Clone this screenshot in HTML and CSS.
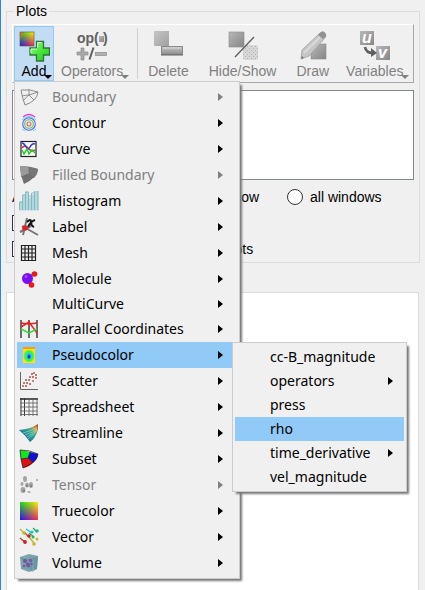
FILE: index.html
```html
<!DOCTYPE html>
<html lang="en">
<head>
<meta charset="utf-8">
<title>Plots</title>
<link rel="stylesheet" href="styles.css">
</head>
<body>
<svg class="defs" width="0" height="0" aria-hidden="true">
  <defs>
    <linearGradient id="gTop"><stop offset="0" stop-color="#18d818"/><stop offset="1" stop-color="#ffee10"/></linearGradient>
    <linearGradient id="gBottom"><stop offset="0" stop-color="#2a10f0"/><stop offset="1" stop-color="#f03050"/></linearGradient>
    <linearGradient id="gFade" x2="0" y2="1"><stop offset="0" stop-color="#000"/><stop offset="1" stop-color="#fff"/></linearGradient>
    <mask id="mFade" maskContentUnits="objectBoundingBox"><rect width="1" height="1" fill="url(#gFade)"/></mask>
    <linearGradient id="gGrey" x2="1" y2="1"><stop offset="0" stop-color="#b8b8b8"/><stop offset="1" stop-color="#868686"/></linearGradient>
    <linearGradient id="gPlus" x2="1" y2="1"><stop offset="0" stop-color="#9dff8a"/><stop offset=".5" stop-color="#4be83c"/><stop offset="1" stop-color="#22c51c"/></linearGradient>
    <linearGradient id="gBar" x2="0" y2="1"><stop offset="0" stop-color="#c8c8c8"/><stop offset="1" stop-color="#8c8c8c"/></linearGradient>
    <radialGradient id="gPseudo"><stop offset="0" stop-color="#1030e0"/><stop offset=".22" stop-color="#1898ff"/><stop offset=".45" stop-color="#20e8c0"/><stop offset=".7" stop-color="#50ee20"/><stop offset=".95" stop-color="#d8f010"/><stop offset="1" stop-color="#ffe010"/></radialGradient>
    <linearGradient id="gStream" x1="1" y1="0" x2="0" y2="1"><stop offset="0" stop-color="#c03010"/><stop offset=".22" stop-color="#c0a040"/><stop offset=".4" stop-color="#30a890"/><stop offset="1" stop-color="#084a90"/></linearGradient>
    <pattern id="pDots" width="4" height="4" patternUnits="userSpaceOnUse"><rect width="4" height="4" fill="#d6d6d6"/><path d="M0 0h1v1h-1zM2 2h1v1h-1z" fill="#b2b2b2"/></pattern>
  </defs>
</svg>
<main class="window">
  <fieldset class="plots">
    <legend>Plots</legend>
    <div class="toolbar" role="toolbar" aria-label="Plots">
      <button class="tool active" type="button">
        <svg viewBox="0 0 32 32"><rect x="2" y="2" width="14" height="14" fill="url(#gTop)"/><rect x="2" y="2" width="14" height="14" fill="url(#gBottom)" mask="url(#mFade)"/><path d="M2 2h4l-4 9z" fill="#f06a18" opacity=".8"/><rect x="2" y="2" width="14" height="14" fill="none" stroke="#5b5540" stroke-width=".6"/><path d="M18.500 11.500h7v6.500h6v7h-6v6h-7v-6h-6.500v-7h6.500z" fill="url(#gPlus)" stroke="#33713a" stroke-width="1.300"/><path d="M19.500 17.500v-5h4M13 23v-4h6" fill="none" stroke="#c9ffc0"/></svg>
        <span class="tool-label arrow">Add</span>
      </button>
      <button class="tool drop" type="button" disabled>
        <svg viewBox="0 0 32 32"><text x="1" y="13" class="op">op(</text><text x="27" y="13" class="op">)</text><rect x="23" y="6" width="5" height="6" fill="url(#gGrey)"/><path d="M5 18h3v4h4v3h-4v5h-3v-5h-4v-3h4z" fill="#a8a8a8" stroke="#8b8b8b" stroke-width=".7"/><path d="M13.500 29.500l4-12" stroke="#606060" stroke-width="2"/><rect x="19.500" y="22.500" width="11" height="3" fill="#b0b0b0" stroke="#8b8b8b" stroke-width=".7"/></svg>
        <span class="tool-label arrow">Operators</span>
      </button>
      <span class="separator"></span>
      <button class="tool" type="button" disabled>
        <svg viewBox="0 0 32 32"><rect x="2" y="1" width="15" height="15" fill="url(#gGrey)" opacity=".75"/><rect x="9.500" y="16.500" width="21" height="8" fill="url(#gBar)" stroke="#8a8a8a"/><path d="M9 25h22" stroke="#606060" stroke-width="1"/><path d="M11 18h18" stroke="#d8d8d8"/></svg>
        <span class="tool-label">Delete</span>
      </button>
      <button class="tool" type="button" disabled>
        <svg viewBox="0 0 32 32"><rect x="2" y="2" width="15" height="15" fill="url(#gGrey)" stroke="#8b8b8b" stroke-width=".6"/><rect x="16" y="15" width="15" height="15" rx="2" fill="url(#pDots)"/><path d="M8 27l19-20" stroke="#606060" stroke-width="1.400"/></svg>
        <span class="tool-label">Hide/Show</span>
      </button>
      <button class="tool" type="button" disabled>
        <svg viewBox="0 0 32 32"><rect x="14" y="14" width="15" height="15" fill="url(#gGrey)" stroke="#8b8b8b" stroke-width=".6"/><path d="M5 20L23 3q3-3 5 0t0 5L12 26l-8 3z" fill="#c6c6c6" stroke="#a0a0a0" stroke-width=".8"/><path d="M22 4q4-4 6-1t0 4l-2 2-5-4z" fill="#919191"/><path d="M7 23L23 7" stroke="#dadada" stroke-width="2"/><path d="M4 29l1-3 2 2z" fill="#777"/></svg>
        <span class="tool-label">Draw</span>
      </button>
      <button class="tool drop" type="button" disabled>
        <svg viewBox="0 0 32 32"><rect x="1" y="1" width="14" height="14" fill="url(#gGrey)"/><rect x="17" y="16" width="14" height="14" fill="url(#gGrey)"/><text x="3" y="13" class="uv">u</text><text x="19" y="28" class="uv">v</text><path d="M6 17q1 6 8 6" fill="none" stroke="#606060" stroke-width="2.600"/><path d="M12 18l6 5-6 4z" fill="#606060"/></svg>
        <span class="tool-label arrow">Variables</span>
      </button>
    </div>
    <div class="plot-list" role="listbox" aria-label="Plot list"></div>
    <div class="options">
      <div class="apply-row">
        <span class="apply-label">Apply to:</span>
        <label class="choice active-window"><input type="radio" name="scope" checked>active window</label>
        <label class="choice"><input type="radio" name="scope">all windows</label>
      </div>
      <label class="choice check"><input type="checkbox">Apply operators to all plots</label>
      <label class="choice check"><input type="checkbox">Apply subset selections to all plots</label>
    </div>
  </fieldset>
  <section class="pane"></section>
</main>

<ul class="menu add-menu">
  <li><button type="button" disabled><svg viewBox="0 0 20 20"><path d="M2 3q9-1 17 2-1 9-13 13Q3 10 2 3zM3 9q4-1 7-1l9-3M10 2v6l5 5M10 8q-2 1-6 6" fill="none" stroke="#8c8c8c"/></svg>Boundary<i class="more"></i></button></li>
  <li><button type="button"><svg viewBox="0 0 20 20"><path d="M4 4q6-5 12 0" fill="none" stroke="#e836d0" stroke-width="1.300"/><path d="M3 7q7-7 14 0M3 16l3 2m11-2l-3 2" fill="none" stroke="#50dff0"/><circle cx="10" cy="11" r="6.300" fill="#f0f0f8" stroke="#5560e8" stroke-width="1.100"/><circle cx="10" cy="11" r="4.300" fill="none" stroke="#50c850" stroke-width="1.100"/><circle cx="10" cy="11" r="2" fill="#fff" stroke="#e86060" stroke-width="1.100"/></svg>Contour<i class="more"></i></button></li>
  <li><button type="button"><svg viewBox="0 0 20 20"><rect x="2" y="2.500" width="15" height="15" fill="#fff" stroke="#222" stroke-width="1.200"/><path d="M3 9q3-4 6 0t7 2" fill="none" stroke="#e83030" stroke-width="1.500"/><path d="M3 4q2 0 4 4t4 0 5-3" fill="none" stroke="#3038e0" stroke-width="1.500"/><path d="M3 11l2 4 3-5 2 5 3-4 3 3" fill="none" stroke="#20cc30" stroke-width="1.500"/></svg>Curve<i class="more"></i></button></li>
  <li><button type="button" disabled><svg viewBox="0 0 20 20"><path d="M1 1q10 0 18 3-1 9-14 15Q2 12 1 1z" fill="#707070"/><path d="M1 1l9 1v7q-3 0-8 3z" fill="#9b9b9b"/><path d="M10 2l9 2q0 5-4 9l-5-4z" fill="#777"/><path d="M10 9l5 4M10 2v7l-8 3" fill="none" stroke="#666" stroke-width=".6"/></svg>Filled Boundary<i class="more"></i></button></li>
  <li><button type="button"><svg viewBox="0 0 20 20"><path d="M.5 19.500v-9h3v-7h3v-3h3v6h3v-3h3v-4h4v20z" fill="#b0d9df"/><path d="M.5 19v-8h3v8m0-8v-7h3v15m0-15v-3h3v18m0-14h3v14m0-14v-3h3v17m0-17v-4h3.500v21" fill="none" stroke="#7fb0b7" stroke-width=".8"/></svg>Histogram<i class="more"></i></button></li>
  <li><button type="button"><svg viewBox="0 0 20 20"><path d="M8 1L4 18M3 9l16 9M1 15l11-6" stroke="#777" stroke-width="2"/><path d="M8 5q4-4 4 0t3 5M16 3q-4 1-7 7" fill="none" stroke="#181818" stroke-width="2"/><circle cx="6" cy="11" r="2.800" fill="#e02020"/></svg>Label<i class="more"></i></button></li>
  <li><button type="button"><svg viewBox="0 0 20 20"><path d="M2.500 2.500h14v15h-14zM6 2.500v15M9.500 2.500v15M13 2.500v15M2.500 6h14M2.500 10h14M2.500 14h14" fill="none" stroke="#222" stroke-width="1.200"/></svg>Mesh<i class="more"></i></button></li>
  <li><button type="button"><svg viewBox="0 0 20 20"><path d="M9 9l6-5M8 10l4 6" stroke="#888" stroke-width="2"/><circle cx="8.500" cy="9.500" r="5.500" fill="#7a10f0"/><circle cx="7" cy="7.500" r="1.500" fill="#9e50ff"/><circle cx="15.500" cy="5" r="2.800" fill="#ea1818"/><circle cx="12.500" cy="16" r="2.800" fill="#ea1818"/></svg>Molecule<i class="more"></i></button></li>
  <li><button class="short" type="button"><span class="no-icon"></span>MultiCurve<i class="more"></i></button></li>
  <li><button type="button"><svg viewBox="0 0 20 20"><path d="M2 1v18M10 1v18M18 1v18" stroke="#333" stroke-width="1.400"/><path d="M2 4l8 1 8-1M2 8l8-5 8 11" fill="none" stroke="#f02020" stroke-width="1.500"/><path d="M2 10l8 4 8-4" fill="none" stroke="#30e030" stroke-width="1.400"/></svg>Parallel Coordinates<i class="more"></i></button></li>
  <li class="open"><button class="selected" type="button"><svg viewBox="0 0 20 20"><rect x="4" y="2" width="12" height="16" fill="#ff9a10"/><rect x="4" y="4" width="12" height="14" fill="#b8f018"/><rect x="4" y="4" width="12" height="14" fill="url(#gPseudo)"/><circle cx="10" cy="12" r="1.500" fill="#1030d0"/></svg>Pseudocolor<i class="more"></i></button>
    <ul class="menu submenu">
      <li><button type="button">cc-B_magnitude</button></li>
      <li><button type="button">operators<i class="more"></i></button></li>
      <li><button type="button">press</button></li>
      <li><button class="selected" type="button">rho</button></li>
      <li><button type="button">time_derivative<i class="more"></i></button></li>
      <li><button type="button">vel_magnitude</button></li>
    </ul>
  </li>
  <li><button type="button"><svg viewBox="0 0 20 20"><path d="M1.500 1v17.500H19" fill="none" stroke="#666"/><g fill="#a85050"><circle cx="4" cy="15" r=".9"/><circle cx="7" cy="15" r="1"/><circle cx="5" cy="12" r="1"/><circle cx="8" cy="12" r="1"/><circle cx="7" cy="9" r="1"/><circle cx="10" cy="9" r="1"/><circle cx="11" cy="6" r="1"/><circle cx="14" cy="6" r="1"/><circle cx="13" cy="3" r="1"/><circle cx="17" cy="4" r="1"/><circle cx="15" cy="2" r=".9"/><circle cx="17" cy="7" r=".9"/><circle cx="14" cy="10" r=".9"/><circle cx="11" cy="13" r="1"/></g></svg>Scatter<i class="more"></i></button></li>
  <li><button type="button"><svg viewBox="0 0 20 20"><path d="M2 2h16v16H2z" fill="#f6f6f6"/><path d="M1 2h18" stroke="#222" stroke-width="1.500"/><path d="M2 1v18M5.500 1v18" stroke="#333"/><path d="M10 2v17M14 2v17M18 2v17M1 6h18M1 10h18M1 14h18M1 17.500h18" stroke="#666" stroke-width=".9"/></svg>Spreadsheet<i class="more"></i></button></li>
  <li><button type="button"><svg viewBox="0 0 20 20"><path d="M0 7Q12 6 19 1v6q-3 9-8 12Q6 12 0 7z" fill="url(#gStream)"/><path d="M4 10q9-2 14-6M6 12q8-2 12-7M8 14q7-3 10-8M9 16q6-4 9-9" fill="none" stroke="#c8e8e8" stroke-width=".5"/></svg>Streamline<i class="more"></i></button></li>
  <li><button type="button"><svg viewBox="0 0 20 20"><path d="M1 1l10 2-2 6-7 1z" fill="#10e818"/><path d="M11 3l8 2q0 5-5 9l-5-5z" fill="#1010d8"/><path d="M2 10l7-1 5 5q-4 4-10 5z" fill="#e01010"/><path d="M1 1q10 0 18 4-1 8-15 14Q2 12 1 1zM11 3L9 9l5 5M9 9l-7 1" fill="none" stroke="#222" stroke-width=".8"/></svg>Subset<i class="more"></i></button></li>
  <li><button type="button" disabled><svg viewBox="0 0 20 20"><g fill="#a4a4a4"><ellipse cx="6" cy="4" rx="2" ry="3"/><ellipse cx="3" cy="9" rx="1.500" ry="2"/><ellipse cx="8" cy="10" rx="2" ry="2.500"/><ellipse cx="12" cy="10" rx="2" ry="3"/><ellipse cx="4" cy="15" rx="2.500" ry="3"/><ellipse cx="10" cy="17" rx="1.500" ry="1"/><circle cx="18" cy="5" r="1"/></g><g fill="#777"><circle cx="5" cy="16" r="1"/><circle cx="8" cy="11" r="1"/><circle cx="12" cy="11" r="1"/></g></svg>Tensor<i class="more"></i></button></li>
  <li><button type="button"><svg viewBox="0 0 20 20"><rect x="1" y="1" width="18" height="18" fill="url(#gTop)"/><rect x="1" y="1" width="18" height="18" fill="url(#gBottom)" mask="url(#mFade)"/></svg>Truecolor<i class="more"></i></button></li>
  <li><button type="button"><svg viewBox="0 0 20 20"><g stroke-width="1.200"><path d="M1 2l5 5M10 10l5 6" stroke="#b8b020"/><path d="M1 11l5 4M5 5l5 5" stroke="#c03020"/><path d="M7 2l6 4" stroke="#20c0b8"/><path d="M14 1l4 4M10 6l5 4" stroke="#20a870"/></g><g fill="#c8b820"><circle cx="5" cy="6" r="1.700"/><circle cx="15" cy="17" r="1.800"/><circle cx="18" cy="12" r="1.500"/></g><g fill="#c82020"><circle cx="6" cy="15" r="1.900"/><circle cx="10" cy="9" r="1.700"/></g><circle cx="13" cy="5" r="1.500" fill="#10c8c8"/><circle cx="18" cy="4" r="1.700" fill="#18b878"/><circle cx="14" cy="10" r="1.500" fill="#20b060"/></svg>Vector<i class="more"></i></button></li>
  <li><button type="button"><svg viewBox="0 0 20 20"><path d="M1 4l9-3 9 2-1 13-8 3-8-3z" fill="#79a5aa"/><path d="M1 4l13 1 5-2-1 13-5 3z" fill="#5f8d98" opacity=".6"/><g fill="#8040a8" opacity=".8"><circle cx="6" cy="8" r="2"/><circle cx="12" cy="7" r="2"/><circle cx="9" cy="12" r="2.200"/><circle cx="13" cy="11" r="1.300"/><circle cx="5" cy="13" r="1.300"/></g><path d="M3 4l11 2v12" fill="none" stroke="#a2c7c9" stroke-width=".5"/></svg>Volume<i class="more"></i></button></li>
</ul>
</body>
</html>
```
FILE: styles.css
```css
* { box-sizing: border-box; }

body {
  margin: 0;
  min-height: 100vh;
  background: #f0f0f0;
  color: #000;
  font: 14px/16px "Liberation Sans", Arial, sans-serif;
  overflow: hidden;
}

.defs { position: absolute; }

button {
  margin: 0;
  border: 0;
  background: none;
  color: inherit;
  font: inherit;
}

.window {
  display: flex;
  flex-direction: column;
  gap: 29px;
  height: 100vh;
  padding: 3px 5px 0 5px;
  border-left: 1px solid #2d87d3;
}

.plots {
  min-width: 0;
  margin: 0;
  padding: 5px;
  border: 1px solid #dcdcdc;
}

.plots legend {
  margin-left: 2px;
  padding: 0 2px;
}

.toolbar {
  display: flex;
  align-items: stretch;
  height: 59px;
  padding: 1px;
  border: 1px solid;
  border-color: #fff #a8a8a8 #a8a8a8 #fff;
}

.tool {
  display: flex;
  flex-direction: column;
  align-items: center;
  gap: 1px;
  padding: 3px 9px 0;
  border: 1px solid transparent;
}

.tool svg { width: 32px; height: 32px; }
.tool:disabled { color: #808080; }
.tool.active { padding: 3px 3px 0; border-color: #90c8f6; background: #c1dcf3; }
.tool.drop { padding: 3px 6px 0; }
.tool-label { position: relative; }

.tool-label.arrow::after {
  content: "";
  position: absolute;
  right: -6px;
  bottom: 0;
  border: 4px solid transparent;
  border-top-color: currentColor;
  border-bottom: 0;
}

.op { font: bold 14px "Liberation Sans", sans-serif; fill: #606060; }
.uv { font: italic bold 16px "Liberation Sans", sans-serif; fill: #fff; }

.separator {
  width: 1px;
  margin: 2px 0 2px 7px;
  background: #d0d0d0;
}

.plot-list {
  height: 90px;
  margin-top: 7px;
  border: 1px solid #828790;
  background: #fff;
}

.options {
  display: flex;
  flex-direction: column;
  gap: 10px;
  padding-top: 9px;
}

.apply-row {
  display: flex;
  align-items: center;
}

.apply-label { width: 137px; }

.choice {
  display: flex;
  align-items: center;
  gap: 7px;
}

.choice.check { gap: 12px; }

.active-window { width: 138px; }

input {
  appearance: none;
  width: 16px;
  height: 16px;
  margin: 0;
  border: 1px solid #333;
  background: #fff;
}

input[type="radio"] { border-radius: 50%; }

.pane {
  flex: 1;
  margin-right: 1px;
  border: 1px solid #dcdcdc;
  border-bottom: 0;
  background: #fff;
}

.menu {
  position: absolute;
  margin: 0;
  padding: 2px;
  border: 1px solid #ccc;
  background: #f0f0f0;
  box-shadow: 3px 3px 2px -1px #777;
  list-style: none;
  font: 14px/20px "Noto Sans", "Open Sans", sans-serif;
}

.add-menu { top: 81px; left: 14px; width: 226px; }

.menu button {
  display: flex;
  align-items: center;
  width: 100%;
  height: 26px;
  padding: 0 14px 0 2px;
  text-align: left;
  white-space: nowrap;
}

.menu button:disabled { color: #808080; }
.menu button.short, .submenu button { height: 24px; }
.menu button.selected { background: #91c9f7; }

.menu svg, .no-icon {
  flex: none;
  width: 20px;
  height: 20px;
  margin-right: 13px;
}

.more {
  margin-left: auto;
  border: 4px solid transparent;
  border-left: 5px solid currentColor;
  border-right: 0;
}

.open { position: relative; }
.submenu { top: 0; left: 215px; width: 175px; }
.submenu button { padding-left: 35px; padding-right: 11px; }
.add-menu .submenu button { height: 24px; }
```
